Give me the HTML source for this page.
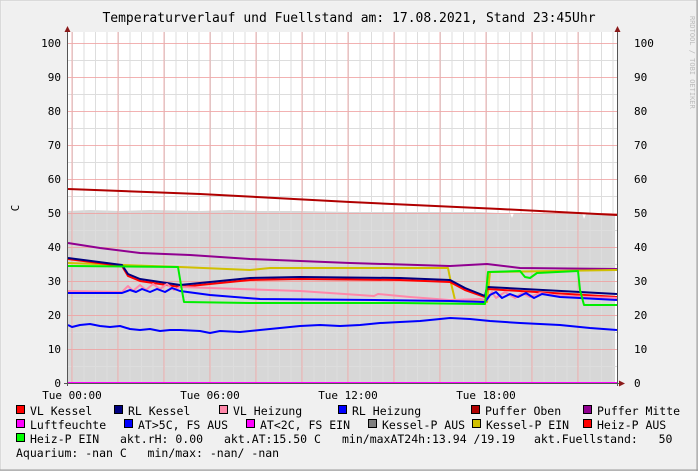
<!DOCTYPE html>
<html><head><meta charset="utf-8"><style>
html,body{margin:0;padding:0;background:#f0f0f0}
svg{display:block}
text{font-family:"DejaVu Sans Mono","Liberation Mono",monospace;fill:#000}
</style></head><body>
<svg width="698" height="471" viewBox="0 0 698 471" xmlns="http://www.w3.org/2000/svg">
<defs>
<pattern id="minv" x="72" y="0" width="11.5" height="471" patternUnits="userSpaceOnUse"><line x1="0.5" y1="0" x2="0.5" y2="471" stroke="#ddd" stroke-width="1"/></pattern>
</defs>
<rect x="0" y="0" width="698" height="471" fill="#f0f0f0"/>
<rect x="0.5" y="0.5" width="697" height="470" fill="none" stroke="#cfcfcf"/>
<rect x="1" y="1" width="696" height="469" fill="none" stroke="#fafafa" stroke-width="1" opacity="0.5"/>
<line x1="0" y1="470" x2="698" y2="470" stroke="#9a9a9a"/>
<line x1="697" y1="0" x2="697" y2="471" stroke="#9a9a9a"/>
<text x="349" y="22" font-size="13" text-anchor="middle">Temperaturverlauf und Fuellstand am: 17.08.2021, Stand 23:45Uhr</text>
<text transform="translate(690,16) rotate(90)" font-size="7" style="fill:#bbb">RRDTOOL / TOBI OETIKER</text>
<!-- plot bg -->
<rect x="68" y="32" width="549" height="351" fill="#fff"/>
<!-- gray area -->
<path d="M68,383 L68,211 L90,210 L120,211 L150,210 L200,211 L230,210 L260,211 L300,211 L350,212 L400,212 L450,212 L480,212 L500,213 L510,213 L512,218 L514,213 L560,213 L582,213 L584,219 L586,214 L615,214 L615,383 Z" fill="#d7d7d7"/>
<!-- minor grid -->
<rect x="68" y="32" width="549" height="351" fill="url(#minv)"/>
<g stroke="#ddd" stroke-width="1">
<line x1="68" y1="60.5" x2="617" y2="60.5"/><line x1="68" y1="94.5" x2="617" y2="94.5"/><line x1="68" y1="128.5" x2="617" y2="128.5"/><line x1="68" y1="162.5" x2="617" y2="162.5"/><line x1="68" y1="196.5" x2="617" y2="196.5"/><line x1="68" y1="230.5" x2="617" y2="230.5"/><line x1="68" y1="264.5" x2="617" y2="264.5"/><line x1="68" y1="298.5" x2="617" y2="298.5"/><line x1="68" y1="332.5" x2="617" y2="332.5"/><line x1="68" y1="366.5" x2="617" y2="366.5"/>
</g>
<g stroke="#f0a0a0" stroke-width="1" opacity="0.8">
<line x1="68" y1="43.5" x2="617" y2="43.5"/><line x1="68" y1="77.5" x2="617" y2="77.5"/><line x1="68" y1="111.5" x2="617" y2="111.5"/><line x1="68" y1="145.5" x2="617" y2="145.5"/><line x1="68" y1="179.5" x2="617" y2="179.5"/><line x1="68" y1="213.5" x2="617" y2="213.5"/><line x1="68" y1="247.5" x2="617" y2="247.5"/><line x1="68" y1="281.5" x2="617" y2="281.5"/><line x1="68" y1="315.5" x2="617" y2="315.5"/><line x1="68" y1="349.5" x2="617" y2="349.5"/>
<line x1="72" y1="32" x2="72" y2="383"/><line x1="118" y1="32" x2="118" y2="383"/><line x1="164" y1="32" x2="164" y2="383"/><line x1="210" y1="32" x2="210" y2="383"/><line x1="256" y1="32" x2="256" y2="383"/><line x1="302" y1="32" x2="302" y2="383"/><line x1="348" y1="32" x2="348" y2="383"/><line x1="394" y1="32" x2="394" y2="383"/><line x1="440" y1="32" x2="440" y2="383"/><line x1="486" y1="32" x2="486" y2="383"/><line x1="532" y1="32" x2="532" y2="383"/><line x1="578" y1="32" x2="578" y2="383"/>
</g>
<g fill="none" stroke-width="2" stroke-linejoin="round">
<!-- Puffer Oben -->
<polyline stroke="#b00000" points="68,189 200,194 350,202 500,209 617,215"/>
<!-- Puffer Mitte -->
<polyline stroke="#900090" points="68,243 100,248 140,253 190,255 250,259 350,263 450,266 487,264 520,268 617,269"/>
<!-- Kessel-P EIN -->
<polyline stroke="#d0c000" points="68,263 180,267 250,270 270,268 448,268 451,283 455,300 487,302 490,272 617,270"/>
<!-- VL Kessel -->
<polyline stroke="#ff0000" points="68,259 122,266 128,276 140,281 180,287 250,280 300,279 400,280 450,282 465,290 485,297 487,289 617,297"/>
<!-- RL Kessel -->
<polyline stroke="#000080" points="68,258 122,265 128,274 140,279 180,285 250,278 300,277 400,278 450,280 465,288 485,296 487,287 617,294"/>
<!-- VL Heizung -->
<polyline stroke="#ff88aa" points="68,291 122,292 128,286 133,291 140,285 146,290 153,284 160,289 167,284 174,290 180,287 240,289 300,291 374,296 378,294 410,297 450,300 480,299 487,300 492,292 496,298 505,292 515,298 522,293 530,297 540,293 560,296 617,298"/>
<!-- RL Heizung -->
<polyline stroke="#0000ff" points="68,293 122,293 130,290 136,292 142,289 150,292 157,289 165,292 172,288 180,291 210,295 260,299 375,300 450,301 485,302 490,295 496,292 502,298 510,294 518,297 526,293 534,298 542,294 560,297 580,298 617,300"/>
<!-- AT>5C -->
<polyline stroke="#0000ff" points="68,325 72,327 80,325 90,324 100,326 110,327 120,326 130,329 140,330 150,329 160,331 170,330 180,330 200,331 210,333 220,331 240,332 260,330 280,328 300,326 320,325 340,326 360,325 380,323 400,322 420,321 440,319 450,318 470,319 490,321 520,323 560,325 590,328 617,330"/>
<!-- Heiz-P EIN -->
<polyline stroke="#00ee00" points="68,266 178,267 181,285 184,302 250,303 300,303 400,303 485,304 488,272 520,271 525,277 530,278 537,273 578,271 580,290 584,305 617,305"/>
</g>
<!-- Luftfeuchte at 0 -->
<line x1="68" y1="383" x2="617" y2="383" stroke="#ff00ff" stroke-width="2"/>
<!-- axes -->
<g stroke="#555" stroke-width="1">
<line x1="67.5" y1="30" x2="67.5" y2="386"/>
<line x1="617.5" y1="30" x2="617.5" y2="386"/>
<line x1="64" y1="383.5" x2="622" y2="383.5"/>
</g>
<polygon points="67.5,26 64.5,32 70.5,32" fill="#8b1a1a"/>
<polygon points="617.5,26 614.5,32 620.5,32" fill="#8b1a1a"/>
<polygon points="625,383.5 619,380.5 619,386.5" fill="#8b1a1a"/>
<g font-size="11">
<text x="61" y="47" text-anchor="end">100</text><text x="61" y="81" text-anchor="end">90</text><text x="61" y="115" text-anchor="end">80</text><text x="61" y="149" text-anchor="end">70</text><text x="61" y="183" text-anchor="end">60</text><text x="61" y="217" text-anchor="end">50</text><text x="61" y="251" text-anchor="end">40</text><text x="61" y="285" text-anchor="end">30</text><text x="61" y="319" text-anchor="end">20</text><text x="61" y="353" text-anchor="end">10</text><text x="61" y="387" text-anchor="end">0</text>
<text x="634" y="47">100</text><text x="634" y="81">90</text><text x="634" y="115">80</text><text x="634" y="149">70</text><text x="634" y="183">60</text><text x="634" y="217">50</text><text x="634" y="251">40</text><text x="634" y="285">30</text><text x="634" y="319">20</text><text x="634" y="353">10</text><text x="634" y="387">0</text>
<text x="72" y="399" text-anchor="middle">Tue 00:00</text><text x="210" y="399" text-anchor="middle">Tue 06:00</text><text x="348" y="399" text-anchor="middle">Tue 12:00</text><text x="486" y="399" text-anchor="middle">Tue 18:00</text>
<text transform="translate(19,208) rotate(-90)" text-anchor="middle">C</text>
</g>
<!-- legend -->
<g stroke="#000" stroke-width="1">
<rect x="16.5" y="405.5" width="8" height="8" fill="#ff0000"/><rect x="114.5" y="405.5" width="8" height="8" fill="#000080"/><rect x="219.5" y="405.5" width="8" height="8" fill="#ff88aa"/><rect x="338.5" y="405.5" width="8" height="8" fill="#0000ff"/><rect x="471.5" y="405.5" width="8" height="8" fill="#b00000"/><rect x="583.5" y="405.5" width="8" height="8" fill="#900090"/>
<rect x="16.5" y="419.5" width="8" height="8" fill="#ff00ff"/><rect x="124.5" y="419.5" width="8" height="8" fill="#0000ff"/><rect x="246.5" y="419.5" width="8" height="8" fill="#ff00ff"/><rect x="368.5" y="419.5" width="8" height="8" fill="#808080"/><rect x="472.5" y="419.5" width="8" height="8" fill="#d0c000"/><rect x="583.5" y="419.5" width="8" height="8" fill="#ff0000"/>
<rect x="16.5" y="433.5" width="8" height="8" fill="#00ff00"/>
</g>
<g font-size="11.5" style="white-space:pre">
<text x="30" y="415">VL Kessel</text><text x="128" y="415">RL Kessel</text><text x="233" y="415">VL Heizung</text><text x="352" y="415">RL Heizung</text><text x="485" y="415">Puffer Oben</text><text x="597" y="415">Puffer Mitte</text>
<text x="30" y="429">Luftfeuchte</text><text x="138" y="429">AT&gt;5C, FS AUS</text><text x="260" y="429">AT&lt;2C, FS EIN</text><text x="382" y="429">Kessel-P AUS</text><text x="486" y="429">Kessel-P EIN</text><text x="597" y="429">Heiz-P AUS</text>
<text x="30" y="443">Heiz-P EIN</text><text x="120" y="443">akt.rH: 0.00</text><text x="224" y="443">akt.AT:15.50 C</text><text x="342" y="443">min/maxAT24h:13.94 /19.19</text><text x="534" y="443" xml:space="preserve">akt.Fuellstand:   50</text>
<text x="16" y="457" xml:space="preserve">Aquarium: -nan C   min/max: -nan/ -nan</text>
</g>
</svg>
</body></html>
